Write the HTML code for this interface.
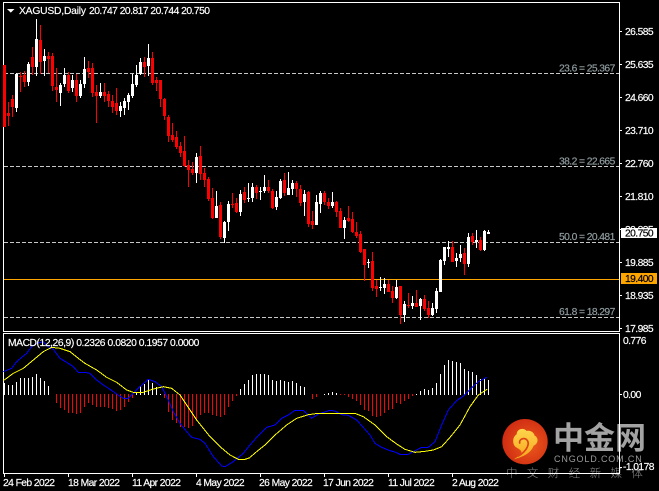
<!DOCTYPE html>
<html><head><meta charset="utf-8">
<style>
html,body{margin:0;padding:0;background:#000;width:659px;height:491px;overflow:hidden}
svg{display:block;position:absolute;left:0;top:0}
text{font-family:"Liberation Sans",sans-serif;font-size:10.3px;fill:#fff;stroke:#fff;stroke-width:.18px;letter-spacing:-.58px}
.f{fill:#8f9c9f;stroke:#8f9c9f}
.k{fill:#000;stroke:#000}
.w{stroke:none}
</style></head><body>
<svg width="659" height="491" viewBox="0 0 659 491" xmlns="http://www.w3.org/2000/svg">
<rect width="659" height="491" fill="#000"/>

<!-- watermark -->
<defs>
<radialGradient id="rg" cx=".6" cy=".55" r=".6"><stop offset="0" stop-color="#ec5a1c"/><stop offset="1" stop-color="#cf2c12"/></radialGradient>
<linearGradient id="yg" x1="0" y1="0" x2="0" y2="1"><stop offset="0" stop-color="#fdd64c"/><stop offset="1" stop-color="#f7a51e"/></linearGradient>
</defs>
<circle cx="525" cy="441.7" r="22.7" fill="url(#rg)"/>
<g transform="translate(498,415) scale(.3333)">
<path d="M46 133C78 126 100 112 107 92C122 86 122 68 110 62C106 48 92 46 86 48C76 36 56 42 56 58C42 66 42 90 56 98C66 104 72 108 70 114C66 122 56 128 46 133Z" fill="url(#yg)"/>
<path d="M66 86C60 74 78 66 86 74C96 84 90 106 60 124" fill="none" stroke="#dc4316" stroke-width="5"/>
</g>
<text class="w" x="553" y="449" style="font-family:'Noto Sans CJK SC',sans-serif;font-size:31px;font-weight:700;letter-spacing:0;fill:#a3a3a3">中金网</text>
<text class="w" x="554" y="462" style="font-size:9px;letter-spacing:.85px;fill:#9a9a9a">CNGOLD.COM.CN</text>
<text class="w" x="506" y="477" style="font-family:'Noto Sans CJK SC',sans-serif;font-size:11.5px;letter-spacing:9.4px;fill:#8c8c8c;font-weight:300">中文财经新媒体</text>

<!-- frames -->
<g shape-rendering="crispEdges" fill="none" stroke="#fff" stroke-width="1">
<path d="M3.5 2.5H619.5V331.5H3.5Z"/>
<path d="M3.5 333.5H619.5V473.5H3.5Z"/>
<path d="M620 31.5h2M620 64.5h2M620 97.5h2M620 130.5h2M620 163.5h2M620 196.5h2M620 229.5h2M620 262.5h2M620 295.5h2M620 328.5h2M620 394.5h2M620 467.5h2"/>
<path d="M4.5 474V477M68.5 474V477M132.5 474V477M196.5 474V477M260.5 474V477M324.5 474V477M388.5 474V477M452.5 474V477"/>
</g>

<!-- fib + level lines -->
<g shape-rendering="crispEdges" fill="none" stroke-width="1">
<path d="M4 73.5H619M4 166.5H619M4 242.5H619M4 317.5H619" stroke="#c8c8c8" stroke-dasharray="4 2"/>
<path d="M4 279.5H619" stroke="#ffa500"/>
</g>

<!-- candles -->
<g shape-rendering="crispEdges" fill="none">
<path stroke="#ff0000" stroke-width="1" d="M4.5 65V127M8.5 102V126M12.5 95V117M20.5 72V92M24.5 71V87M32.5 47V75M40.5 25V74M48.5 52V73M52.5 53V91M56.5 68V102M68.5 72V93M76.5 74V102M88.5 61V78M92.5 63V97M96.5 85V123M104.5 83V102M108.5 91V107M112.5 95V113M116.5 88V115M144.5 57V77M152.5 52V85M156.5 77V91M160.5 80V107M164.5 98V120M168.5 115V142M172.5 123V142M176.5 131V149M180.5 142V157M184.5 136V167M188.5 160V187M192.5 162V175M200.5 146V180M204.5 168V187M208.5 177V201M212.5 188V219M220.5 202V239M232.5 193V208M236.5 198V213M244.5 187V203M256.5 185V199M268.5 180V193M272.5 189V209M284.5 173V196M296.5 181V197M300.5 185V206M308.5 191V227M312.5 211V229M324.5 191V205M328.5 198V209M336.5 201V217M340.5 208V228M348.5 206V222M352.5 212V233M356.5 222V238M360.5 231V253M364.5 249V281M372.5 252V291M376.5 280V297M388.5 280V292M392.5 286V303M400.5 286V324M408.5 293V308M416.5 290V307M424.5 295V311M428.5 301V318M452.5 241V262M464.5 248V275M472.5 233V245M480.5 237V251"/>
<path stroke="#ff0000" stroke-width="3" d="M4.5 65V127M8.5 113V116M12.5 99V107M20.5 76V77M24.5 75V82M32.5 57V67M40.5 40V62M48.5 56V59M52.5 56V86M56.5 87V90M68.5 75V91M76.5 80V96M88.5 68V72M92.5 68V93M96.5 92V96M104.5 92V96M108.5 94V101M112.5 101V107M116.5 103V111M144.5 62V67M152.5 58V83M156.5 80V83M160.5 80V99M164.5 99V116M168.5 117V136M172.5 135V140M176.5 137V147M180.5 146V153M184.5 151V166M188.5 165V170M192.5 169V173M200.5 156V174M204.5 173V180M208.5 179V199M212.5 198V218M220.5 205V237M232.5 204V205M236.5 203V212M244.5 192V200M256.5 187V193M268.5 187V191M272.5 191V208M284.5 180V193M296.5 183V189M300.5 189V203M308.5 192V224M312.5 221V225M324.5 193V202M328.5 202V206M336.5 202V212M340.5 211V228M348.5 218V221M352.5 219V232M356.5 232V236M360.5 234V252M364.5 249V265M372.5 261V288M376.5 286V289M388.5 284V292M392.5 291V298M400.5 286V315M408.5 305V306M416.5 303V307M424.5 299V309M428.5 308V315M452.5 247V262M464.5 253V264M472.5 236V242M480.5 240V250"/>
<path stroke="#ffffff" stroke-width="1" d="M16.5 73V112M28.5 62V86M36.5 19V76M44.5 49V76M60.5 83V106M64.5 68V87M72.5 75V92M80.5 80V98M84.5 57V88M100.5 83V98M120.5 102V117M124.5 98V115M128.5 93V110M132.5 74V98M136.5 65V87M140.5 58V75M148.5 44V76M196.5 153V183M216.5 191V218M224.5 221V243M228.5 201V231M240.5 190V216M248.5 183V202M252.5 183V202M260.5 187V200M264.5 175V193M276.5 191V210M280.5 179V199M288.5 172V195M292.5 180V195M304.5 190V216M316.5 195V225M320.5 191V213M332.5 192V208M344.5 217V239M368.5 259V268M380.5 277V291M384.5 278V294M396.5 280V299M404.5 301V322M412.5 296V309M420.5 298V320M432.5 303V316M436.5 288V313M440.5 259V292M444.5 247V265M448.5 241V257M456.5 253V267M460.5 245V262M468.5 233V267M476.5 230V248M484.5 230V251M488.5 230V234"/>
<path stroke="#ffffff" stroke-width="3" d="M16.5 74V108M28.5 64V82M36.5 39V67M44.5 56V61M60.5 85V93M64.5 75V84M72.5 80V88M80.5 84V96M84.5 69V84M100.5 92V96M120.5 106V111M124.5 101V108M128.5 95V102M132.5 84V96M136.5 75V85M140.5 62V74M148.5 58V66M196.5 157V173M216.5 206V218M224.5 222V238M228.5 204V222M240.5 194V212M248.5 198V199M252.5 187V198M260.5 191V192M264.5 187V191M276.5 197V207M280.5 181V198M288.5 188V195M292.5 183V189M304.5 194V202M316.5 202V225M320.5 193V204M332.5 202V206M344.5 220V228M368.5 262V263M380.5 287V288M384.5 284V288M396.5 287V298M404.5 304V315M412.5 303V306M420.5 299V306M432.5 308V315M436.5 291V309M440.5 260V292M444.5 247V261M448.5 247V249M456.5 258V261M460.5 254V258M468.5 237V264M476.5 240V242M484.5 231V250M488.5 232V234"/>
</g>

<!-- MACD histogram -->
<g shape-rendering="crispEdges" fill="none" stroke-width="1">
<path stroke="#fff" d="M4.5 395V383M8.5 395V385M12.5 395V385M16.5 395V382M20.5 395V378M24.5 395V378M28.5 395V378M32.5 395V377M36.5 395V374M40.5 395V378M44.5 395V381M48.5 395V386M136.5 395V392M140.5 395V386M144.5 395V384M148.5 395V379M152.5 395V383M156.5 395V387M160.5 395V394M240.5 395V389M244.5 395V384M248.5 395V380M252.5 395V375M256.5 395V374M260.5 395V374M264.5 395V374M268.5 395V375M272.5 395V380M276.5 395V381M280.5 395V380M284.5 395V381M288.5 395V382M292.5 395V381M296.5 395V383M300.5 395V386M304.5 395V387M324.5 395V394M328.5 395V393M332.5 395V392M336.5 395V393M416.5 395V394M420.5 395V391M424.5 395V389M428.5 395V390M432.5 395V388M436.5 395V383M440.5 395V374M444.5 395V365M448.5 395V360M452.5 395V361M456.5 395V362M460.5 395V363M464.5 395V369M468.5 395V371M472.5 395V372M476.5 395V375M480.5 395V379M484.5 395V379M488.5 395V380"/>
<path stroke="#f00" d="M56.5 394V403M60.5 394V408M64.5 394V410M68.5 394V413M72.5 394V413M76.5 394V414M80.5 394V413M84.5 394V407M88.5 394V403M92.5 394V405M96.5 394V407M100.5 394V407M104.5 394V407M108.5 394V408M112.5 394V409M116.5 394V411M120.5 394V410M124.5 394V407M128.5 394V402M132.5 394V398M164.5 394V398M168.5 394V412M172.5 394V420M176.5 394V423M180.5 394V427M184.5 394V427M188.5 394V428M192.5 394V426M196.5 394V419M200.5 394V415M204.5 394V413M208.5 394V413M212.5 394V415M216.5 394V416M220.5 394V417M224.5 394V415M228.5 394V407M232.5 394V401M236.5 394V396M312.5 394V399M316.5 394V397M340.5 394V395M344.5 394V395M348.5 394V397M352.5 394V399M356.5 394V401M360.5 394V405M364.5 394V410M368.5 394V411M372.5 394V416M376.5 394V417M380.5 394V416M384.5 394V413M388.5 394V410M392.5 394V409M396.5 394V403M400.5 394V404M404.5 394V401M408.5 394V399M412.5 394V396"/>
</g>

<!-- MACD lines -->
<g transform="translate(0,330) scale(.33333)" fill="none" stroke-width="3" shape-rendering="crispEdges">
<polyline stroke="#0000ff" points="10,125 35,115 50,95 65,82 80,70 95,50 110,40 130,35 145,50 160,58 180,85 200,97 220,110 235,127 255,127 270,130 290,150 310,165 330,178 350,192 370,205 385,205 400,190 420,170 445,148 465,155 485,170 500,200 520,245 540,280 560,305 575,322 600,328 615,340 640,380 665,408 675,410 700,395 730,370 750,345"/>
<polyline stroke="#ffff00" points="10,152 40,130 70,115 100,90 130,65 155,52 180,55 210,65 235,85 255,100 290,120 320,142 350,157 380,180 400,187 430,187 460,177 490,170 515,175 540,195 560,225 590,270 630,320 660,350 690,375 715,388 735,388 750,383"/>
</g>
<g transform="translate(250,330) scale(.33333)" fill="none" stroke-width="3" shape-rendering="crispEdges">
<polyline stroke="#0000ff" points="0,345 20,322 50,292 75,285 95,265 115,255 135,241 160,241 185,265 205,252 240,241 255,243 275,254 295,256 320,270 345,298 360,315 375,340 395,352 420,362 435,366 450,373 475,373 490,365 515,352 535,352 555,335 575,285 595,240 620,212 640,198 660,178 685,155 710,142"/>
<polyline stroke="#ffff00" points="0,382 20,365 45,345 75,315 110,285 140,265 175,254 205,250 315,250 340,260 375,285 410,320 440,342 465,358 495,367 525,364 550,360 575,350 600,322 630,285 660,230 685,195 712,177"/>
</g>

<!-- header -->
<path d="M7 9h7.5l-3.7 3.6z" fill="#fff"/>
<text x="19" y="14" style="letter-spacing:-.2px">XAGUSD,Daily</text>
<text x="89" y="14" style="letter-spacing:-.52px">20.747 20.817 20.744 20.750</text>

<!-- fib labels -->
<text class="f" x="559" y="71.5">23.6 = 25.367</text>
<text class="f" x="559" y="164.5">38.2 = 22.665</text>
<text class="f" x="559" y="240">50.0 = 20.481</text>
<text class="f" x="559" y="315">61.8 = 18.297</text>

<!-- price axis -->
<text x="625" y="35">26.585</text>
<text x="625" y="68">25.635</text>
<text x="625" y="101">24.660</text>
<text x="625" y="134">23.710</text>
<text x="625" y="167">22.760</text>
<text x="625" y="200">21.810</text>
<text x="625" y="233">20.835</text>
<text x="625" y="266">19.885</text>
<text x="625" y="299">18.935</text>
<text x="625" y="332">17.985</text>

<rect x="621" y="228" width="36" height="10" fill="#fff" shape-rendering="crispEdges"/>
<text class="k" x="625" y="236.5">20.750</text>
<rect x="621" y="273" width="36" height="11" fill="#ffa500" shape-rendering="crispEdges"/>
<text class="k" x="625" y="282">19.400</text>

<!-- MACD text -->
<text x="8" y="346" style="letter-spacing:-.44px">MACD(12,26,9) 0.2326 0.0820 0.1957 0.0000</text>
<text x="623" y="344">0.776</text>
<text x="623" y="398">0.00</text>
<text x="623" y="470">-1.0178</text>

<!-- date axis -->
<text x="3" y="486">24 Feb 2022</text>
<text x="68" y="486">18 Mar 2022</text>
<text x="132" y="486">11 Apr 2022</text>
<text x="196" y="486">4 May 2022</text>
<text x="259" y="486">26 May 2022</text>
<text x="323" y="486">17 Jun 2022</text>
<text x="388" y="486">11 Jul 2022</text>
<text x="452" y="486">2 Aug 2022</text>
</svg>
</body></html>
